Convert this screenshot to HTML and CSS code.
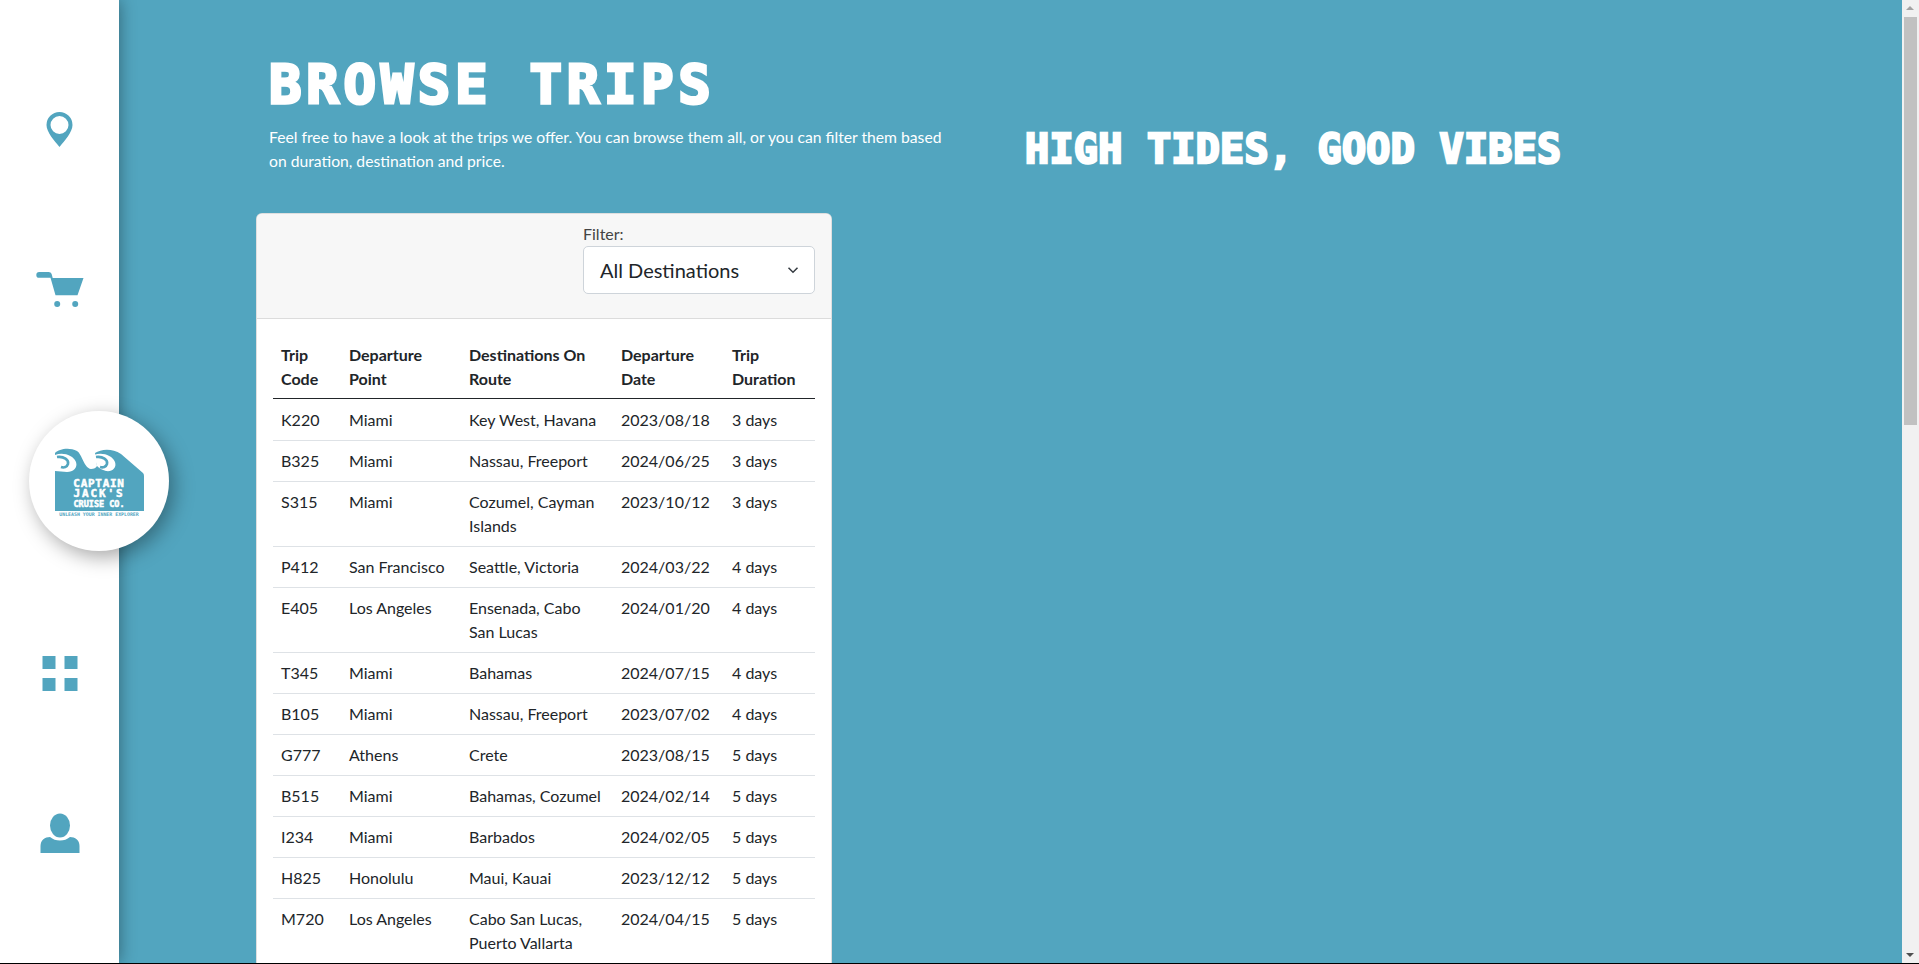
FILE: index.html
```html
<!DOCTYPE html>
<html lang="en">
<head>
    <meta charset="UTF-8">
    <meta name="viewport" content="width=device-width, initial-scale=1.0">
    <title>Browse Trips</title>
    <link rel="stylesheet" href="styles.css">
</head>
<body>
    <div class="page">
        <nav class="sidebar">
            <svg class="nav-icon" viewBox="0 0 60 60">
                <path fill-rule="evenodd" d="M29.5 12a13 13 0 0 1 13 13c0 7-8 16-13 22c-5-6-13-15-13-22a13 13 0 0 1 13-13zM29.5 16a9 9 0 1 0 0 18a9 9 0 1 0 0-18z"/>
            </svg>
            <svg class="nav-icon" viewBox="0 0 60 60">
                <path d="M9.2 12h9.3c1.600 0 2.700.7 3.200 2.200l1 3.800h30.800l-6 17.200H25.500l-5-17.400h-11.300a2.900 2.900 0 0 1 0-5.800z"/>
                <circle cx="27.200" cy="44" r="3"/>
                <circle cx="45.200" cy="44" r="3"/>
            </svg>
            <div class="logo">
                <svg viewBox="0 0 140 140">
                    <path class="logo-fill" d="M26 100V42c4-4 14-6 22-2c5 3 7 17 14 18c3 0 5-1 6-3l-2-13c6-4 17-5 26 1l22 19q1 1 1 3v35z"/>
                    <path class="logo-white" d="M26 44c8-3 18 0 21 7c2 6-3 10-9 10c-4 0-8-1-12-1zM65 44c8-3 18 0 21 7c2 6-3 10-9 9c-4-1-7-3-9-5l-3-11z"/>
                    <path class="logo-curl" d="M28 46c7-1 12 3 11 7c-1 3-4 4-7 3M67 46c7-1 12 3 11 7c-1 3-4 4-7 3"/>
                    <text class="logo-line" x="70" y="76">CAPTAIN</text>
                    <text class="logo-line logo-wide" x="70" y="86">JACK'S</text>
                    <text class="logo-line logo-small" x="70" y="96">CRUISE CO.</text>
                    <text class="logo-tag" x="70" y="105">UNLEASH YOUR INNER EXPLORER</text>
                </svg>
            </div>
            <svg class="nav-icon" viewBox="0 0 60 60">
                <rect x="12.500" y="13" width="13" height="13"/>
                <rect x="34.500" y="13" width="13" height="13"/>
                <rect x="12.500" y="35" width="13" height="13"/>
                <rect x="34.500" y="35" width="13" height="13"/>
            </svg>
            <svg class="nav-icon" viewBox="0 0 60 60">
                <ellipse cx="30" cy="22.500" rx="10" ry="12"/>
                <path d="M10.500 50v-7c0-6 4.500-9 9.500-9c3 2.500 6 3.500 10 3.500s7-1 10-3.500c5 0 9.500 3 9.500 9v7z"/>
            </svg>
        </nav>

        <main class="content">
            <div class="hero">
                <div class="intro">
                    <h1>BROWSE TRIPS</h1>
                    <p>Feel free to have a look at the trips we offer. You can browse them all, or you can filter them based on duration, destination and price.</p>
                </div>
                <h2 class="tagline">HIGH TIDES, GOOD VIBES</h2>
            </div>

            <section class="card">
                <div class="card-header">
                    <div class="filter">
                        <label for="dest">Filter:</label>
                        <div class="select" id="dest">
                            <span>All Destinations</span>
                            <svg class="chevron" viewBox="0 0 16 16"><path d="M2 5l6 6 6-6"/></svg>
                        </div>
                    </div>
                </div>
                <div class="card-body">
                    <table>
                        <colgroup>
                            <col class="col-code">
                            <col class="col-point">
                            <col class="col-route">
                            <col class="col-date">
                            <col class="col-days">
                        </colgroup>
                        <thead>
                            <tr><th>Trip Code</th><th>Departure Point</th><th>Destinations On Route</th><th>Departure Date</th><th>Trip Duration</th></tr>
                        </thead>
                        <tbody>
                            <tr><td>K220</td><td>Miami</td><td>Key West, Havana</td><td>2023/08/18</td><td>3 days</td></tr>
                            <tr><td>B325</td><td>Miami</td><td>Nassau, Freeport</td><td>2024/06/25</td><td>3 days</td></tr>
                            <tr><td>S315</td><td>Miami</td><td>Cozumel, Cayman Islands</td><td>2023/10/12</td><td>3 days</td></tr>
                            <tr><td>P412</td><td>San Francisco</td><td>Seattle, Victoria</td><td>2024/03/22</td><td>4 days</td></tr>
                            <tr><td>E405</td><td>Los Angeles</td><td>Ensenada, Cabo San Lucas</td><td>2024/01/20</td><td>4 days</td></tr>
                            <tr><td>T345</td><td>Miami</td><td>Bahamas</td><td>2024/07/15</td><td>4 days</td></tr>
                            <tr><td>B105</td><td>Miami</td><td>Nassau, Freeport</td><td>2023/07/02</td><td>4 days</td></tr>
                            <tr><td>G777</td><td>Athens</td><td>Crete</td><td>2023/08/15</td><td>5 days</td></tr>
                            <tr><td>B515</td><td>Miami</td><td>Bahamas, Cozumel</td><td>2024/02/14</td><td>5 days</td></tr>
                            <tr><td>I234</td><td>Miami</td><td>Barbados</td><td>2024/02/05</td><td>5 days</td></tr>
                            <tr><td>H825</td><td>Honolulu</td><td>Maui, Kauai</td><td>2023/12/12</td><td>5 days</td></tr>
                            <tr><td>M720</td><td>Los Angeles</td><td>Cabo San Lucas, Puerto Vallarta</td><td>2024/04/15</td><td>5 days</td></tr>
                        </tbody>
                    </table>
                </div>
            </section>
        </main>

        <div class="scrollbar">
            <div class="arrow-up"></div>
            <div class="thumb"></div>
            <div class="arrow-down"></div>
        </div>
    </div>
</body>
</html>
```

FILE: styles.css
```css
html, body {
    margin: 0;
    height: 100%;
    overflow: hidden;
    background-color: #000;
}

body {
    font-family: "Lato", Arial, sans-serif;
    font-size: 16px;
    line-height: 24px;
    color: #212529;
}

.page {
    display: flex;
    height: 963px;
    overflow: hidden;
    background-color: #52a5bf;
}

/* left nav */
.sidebar {
    flex: 0 0 119px;
    min-width: 0;
    box-sizing: border-box;
    display: flex;
    flex-direction: column;
    align-items: center;
    gap: 100px;
    padding-top: 100px;
    background-color: #fff;
    box-shadow: 0 0 16px rgba(0,0,0,0.4);
    position: relative;
    z-index: 2;
}

.nav-icon {
    flex: none;
    width: 60px;
    height: 60px;
    fill: #52a5bf;
}

.logo {
    flex: none;
    align-self: flex-start;
    width: 140px;
    height: 140px;
    margin: -9px 0 -8px 29px;
    background-color: #fff;
    border-radius: 50%;
    box-shadow: 5px 6px 20px rgba(0,0,0,0.35);
}

.logo svg {
    display: block;
    width: 140px;
    height: 140px;
}

.logo-fill {
    fill: #52a5bf;
}

.logo-white {
    fill: #fff;
}

.logo-curl {
    fill: none;
    stroke: #52a5bf;
    stroke-width: 2.6;
}

.logo-line {
    font-family: "DejaVu Sans Mono", monospace;
    font-weight: 700;
    font-size: 11px;
    letter-spacing: 0.7px;
    text-anchor: middle;
    fill: #fff;
    stroke: #fff;
    stroke-width: 0.5px;
}

.logo-wide {
    letter-spacing: 1.9px;
}

.logo-small {
    font-size: 8.5px;
    letter-spacing: 0;
}

.logo-tag {
    font-family: "DejaVu Sans Mono", monospace;
    font-weight: 700;
    font-size: 4.900px;
    text-anchor: middle;
    fill: #52a5bf;
}

/* main column */
.content {
    flex: 1;
    min-width: 0;
    padding: 0 0 0 137px;
}

.hero {
    display: flex;
    height: 213px;
}

.intro {
    flex: 0 0 769px;
    padding: 58px 0 0 13px;
    box-sizing: border-box;
}

h1, .tagline {
    margin: 0;
    font-family: "DejaVu Sans Mono", monospace;
    font-weight: 700;
    color: #fff;
}

h1 {
    font-size: 54px;
    line-height: 54px;
    letter-spacing: 4.7px;
    -webkit-text-stroke: 3px #fff;
}

.intro p {
    width: 680px;
    margin: 13px 0 0;
    font-size: 15.7px;
    color: #fff;
}

.tagline {
    margin-top: 125px;
    font-size: 40px;
    line-height: 48px;
    letter-spacing: 0.3px;
    -webkit-text-stroke: 2.5px #fff;
}

.card {
    width: 576px;
    box-sizing: border-box;
    background-color: #fff;
    border: 1px solid rgba(0,0,0,0.125);
    border-radius: 6px;
}

.card-header {
    display: flex;
    justify-content: flex-end;
    height: 105px;
    box-sizing: border-box;
    padding: 8px 16px 0;
    background-color: #f7f7f7;
    border-bottom: 1px solid #dcdcdc;
    border-radius: 5px 5px 0 0;
}

.filter {
    width: 232px;
}

.filter label {
    display: block;
    color: #444;
}

.select {
    display: flex;
    justify-content: space-between;
    align-items: center;
    height: 48px;
    box-sizing: border-box;
    padding: 0 16px;
    font-size: 20px;
    background-color: #fff;
    border: 1px solid #ced4da;
    border-radius: 5px;
}

.chevron {
    width: 12px;
    height: 12px;
    margin-right: -1px;
    fill: none;
    stroke: #343a40;
    stroke-width: 2;
}

.card-body {
    padding: 16px;
}

table {
    width: 100%;
    table-layout: fixed;
    border-collapse: separate;
    border-spacing: 0;
}

.col-code { width: 68px; }
.col-point { width: 120px; }
.col-route { width: 152px; }
.col-date { width: 111px; }
.col-days { width: 91px; }

th, td {
    padding: 8px;
    text-align: left;
    vertical-align: top;
    border-bottom: 1px solid #dee2e6;
}

th {
    padding-bottom: 7px;
    font-weight: 700;
    border-bottom: 1px solid #212529;
}

tbody tr:first-child td {
    padding-top: 9px;
}

/* painted scrollbar */
.scrollbar {
    flex: 0 0 17px;
    display: flex;
    flex-direction: column;
    background-color: #f1f1f1;
    position: relative;
}

.thumb {
    width: 13px;
    height: 408px;
    margin: 17px 2px 0;
    background-color: #c1c1c1;
}

.arrow-up, .arrow-down {
    position: absolute;
    left: 4px;
    width: 0;
    height: 0;
    border-left: 4px solid transparent;
    border-right: 4px solid transparent;
}

.arrow-up {
    top: 6px;
    border-bottom: 4px solid #a3a3a3;
}

.arrow-down {
    bottom: 6px;
    border-top: 4px solid #505050;
}
```
